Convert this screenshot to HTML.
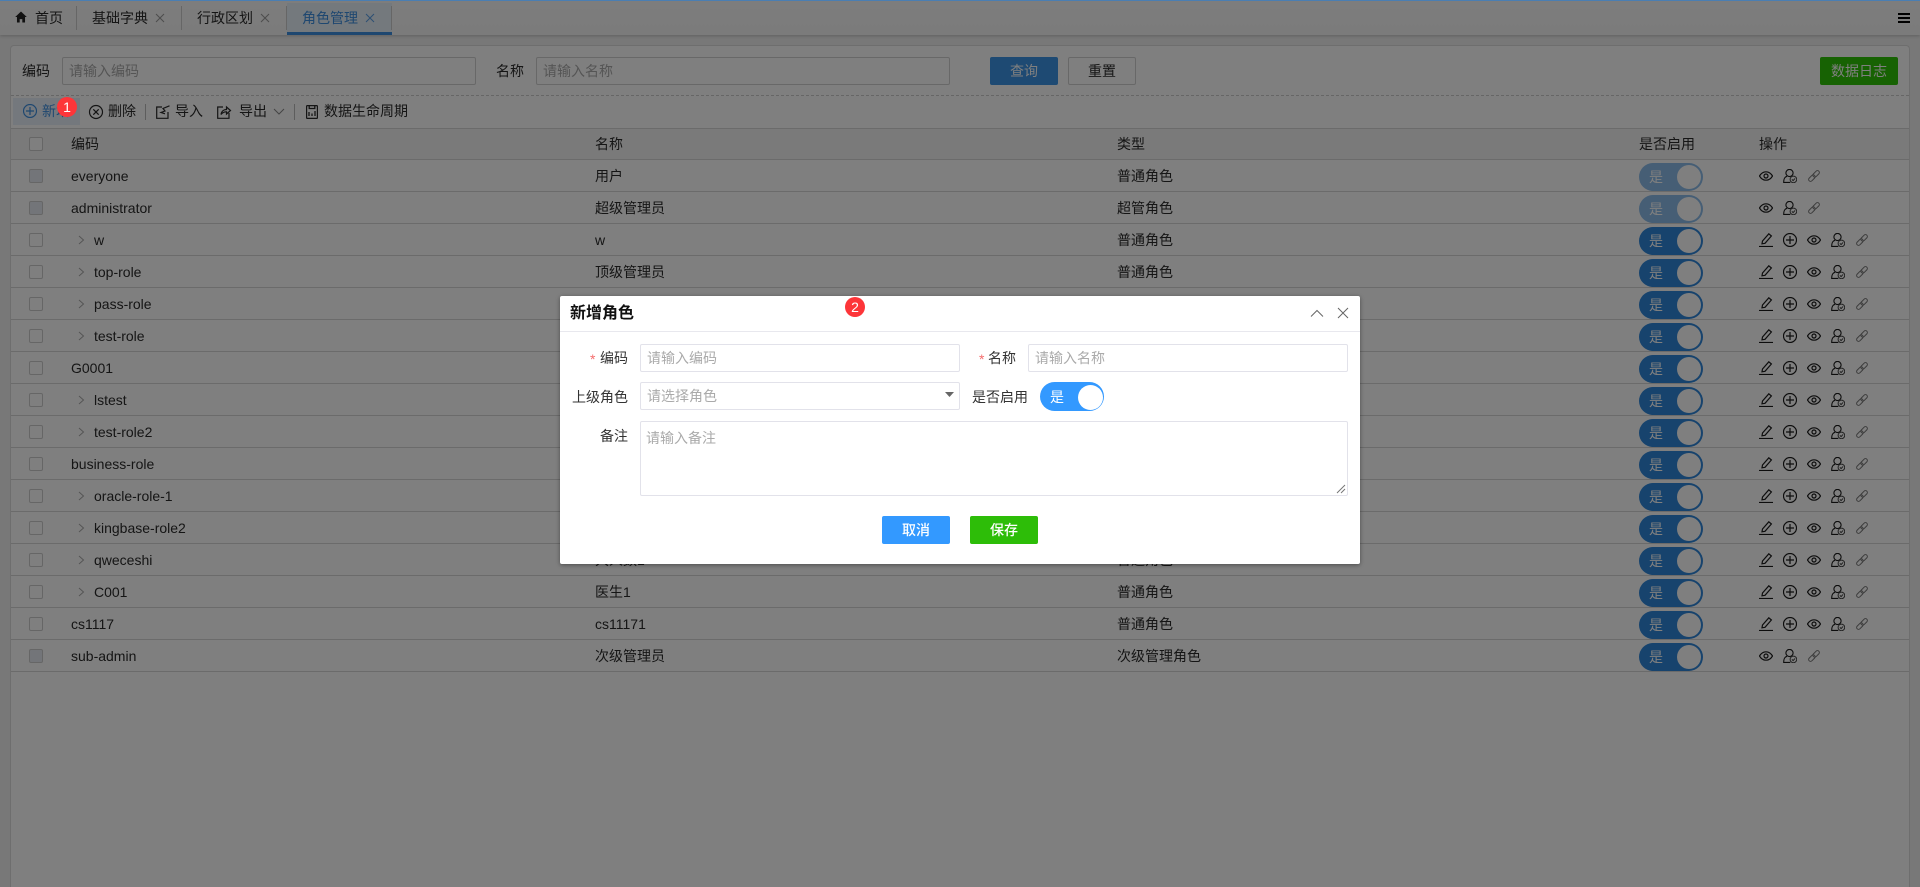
<!DOCTYPE html>
<html lang="zh-CN"><head><meta charset="utf-8"><title>角色管理</title>
<style>
*{box-sizing:border-box}
html,body{margin:0;padding:0;width:1920px;height:887px;overflow:hidden;background:#f0f0f0;font:14px/20px "Liberation Sans","Noto Sans CJK SC",sans-serif;color:#2a2a2a}
.a{position:absolute}
.t{position:absolute;white-space:nowrap}
svg{position:absolute;fill:none;stroke:currentColor;overflow:visible}
#tabs{left:0;top:0;width:1920px;height:35px;background:linear-gradient(#fbfbfb,#f6f6f6);box-shadow:0 1px 3px rgba(0,0,0,.2)}
.dv{position:absolute;top:6px;height:24px;width:1px;background:#ccc}
.x{color:#999}
#panel{left:10px;top:45px;width:1900px;height:842px;background:#fff;border:1px solid #dcdcdc;border-bottom:0;border-radius:4px 4px 0 0}
.in{position:absolute;height:28px;border:1px solid #d0d0d0;border-radius:2px;background:#fff;color:#aaa;padding:3px 6px}
#rows{position:absolute;left:11px;top:160px;width:1898px}
.r{position:relative;height:32px;border-bottom:1px solid #d6d6d6}
.hd{left:11px;top:128px;width:1898px;height:32px;background:#f5f5f5;border-top:1px solid #d6d6d6;border-bottom:1px solid #d6d6d6}
.cb{position:absolute;left:18px;top:9px;width:14px;height:14px;border:1px solid #ccc;border-radius:2px;background:#fff}
.cb.d{background:#e6ebf2;border-color:#ccc}
.c{position:absolute;top:6px;white-space:nowrap}
.c0{left:60px}.c0i{left:83px}.c1{left:584px}.c2{left:1106px}
.ch{position:absolute;left:67px;top:11px;color:#aaa}
.sw{position:absolute;left:1628px;top:3px;width:64px;height:28px;border-radius:14px;background:#2f87da;color:#fff}
.sw span{position:absolute;left:10px;top:4px}
.sw i{position:absolute;left:38px;top:2px;width:24px;height:24px;border-radius:50%;background:#fff}
.sw.d{opacity:.55}
.i1{left:1748px}.i2{left:1772px}.i3{left:1796px}.i4{left:1820px}.i5{left:1845px}
.ic{top:9px;color:#1a1a1a}
.lk{color:#777}
#ov{left:0;top:0;width:1920px;height:887px;background:rgba(0,0,0,.5)}
#topl{left:0;top:0;width:1920px;height:1px;background:#4a7eb2}
.bd{position:absolute;width:20px;height:20px;border-radius:50%;background:#fd3539;color:#fff;text-align:center;line-height:20px;font-size:14px}
#m{left:560px;top:296px;width:800px;height:268px;background:#fff;border-radius:2px;box-shadow:0 1px 4px rgba(0,0,0,.4);color:#333}
.mi{position:absolute;border:1px solid #e2e2ea;border-radius:2px;color:#aaa;background:#fff;padding:3px 6px;height:28px}
.req{color:#f56c6c;font-size:14px}
.btn{position:absolute;top:220px;width:68px;height:28px;border-radius:2px;color:#fff;text-align:center;line-height:28px;font-weight:500}
</style></head><body>
<svg width="0" height="0" style="position:absolute">
<symbol id="eye" viewBox="0 0 14 14"><path d="M.5 7C2.3 4 4.400 2.800 7 2.800S11.700 4 13.500 7C11.700 10 9.600 11.200 7 11.200S2.300 10 .5 7z" stroke-width="1.200"/><circle cx="7" cy="7" r="2" stroke-width="1.200"/></symbol>
<symbol id="usr" viewBox="0 0 14 14"><circle cx="6.500" cy="4" r="3.600" stroke-width="1.100"/><path d="M4 7.300C1.800 7.900 .7 9.300 .7 13.400H7.300" stroke-width="1.100"/><circle cx="10.400" cy="10.400" r="3.300" stroke-width="1" stroke="#444"/><path d="M8.900 10.400l1.200 1.200 2-2.200" stroke-width="1" stroke="#444"/></symbol>
<symbol id="lnk" viewBox="0 0 12 12"><g transform="rotate(-45 6 6)"><rect x="-.8" y="4.100" width="7.600" height="3.800" rx="1.900" stroke-width="1"/><rect x="5.200" y="4.100" width="7.600" height="3.800" rx="1.900" stroke-width="1"/></g></symbol>
<symbol id="edt" viewBox="0 0 14 14"><path d="M3 10.800L3.500 8 9.800.8l2.600 2.200L6 10.300z" stroke-width="1.200"/><path d="M0 13.500H14" stroke-width="1.200"/></symbol>
<symbol id="pls" viewBox="0 0 14 14"><circle cx="7" cy="7" r="6.500" stroke-width="1.200"/><path d="M7 3V11M3 7H11" stroke-width="1.200"/></symbol>
<symbol id="chv" viewBox="0 0 7 10"><path d="M1 1L5.500 5 1 9" stroke-width="1"/></symbol>
</svg>

<div id="tabs" class="a">
<svg style="left:15px;top:11px" width="12" height="12" viewBox="0 0 11 11"><path d="M5.500.5L.2 5.500H1.800V10.500H4.300V7.500H6.700V10.500H9.200V5.500H10.800z" fill="#222" stroke="none"/></svg>
<span class="t" style="left:35px;top:8px">首页</span><i class="dv" style="left:76px"></i>
<span class="t" style="left:92px;top:8px">基础字典</span><svg class="x" style="left:156px;top:14px" width="8" height="8"><path d="M0 0L8 8M8 0L0 8"/></svg><i class="dv" style="left:181px"></i>
<span class="t" style="left:197px;top:8px">行政区划</span><svg class="x" style="left:261px;top:14px" width="8" height="8"><path d="M0 0L8 8M8 0L0 8"/></svg><i class="dv" style="left:286px"></i>
<div class="a" style="left:287px;top:3px;width:105px;height:32px;background:#e8f2fb;border-bottom:3px solid #3d8fe0"></div>
<span class="t" style="left:302px;top:8px;color:#3d8fe0">角色管理</span><svg style="left:366px;top:14px;color:#5aa0e6" width="8" height="8"><path d="M0 0L8 8M8 0L0 8"/></svg><i class="dv" style="left:391px"></i>
<div class="a" style="left:1898px;top:13px;width:12px;height:2px;background:#000"></div><div class="a" style="left:1898px;top:17px;width:12px;height:2px;background:#000"></div><div class="a" style="left:1898px;top:21px;width:12px;height:2px;background:#000"></div>
</div>

<div id="panel" class="a"></div>
<span class="t" style="left:22px;top:61px">编码</span><div class="in" style="left:62px;top:57px;width:414px">请输入编码</div>
<span class="t" style="left:496px;top:61px">名称</span><div class="in" style="left:536px;top:57px;width:414px">请输入名称</div>
<div class="a" style="left:990px;top:57px;width:68px;height:28px;background:#3c94e6;border-radius:2px;color:#fff;text-align:center;line-height:28px">查询</div>
<div class="a" style="left:1068px;top:57px;width:68px;height:28px;background:#fff;border:1px solid #d0d0d0;border-radius:2px;text-align:center;line-height:26px">重置</div>
<div class="a" style="left:1820px;top:57px;width:78px;height:28px;background:#2fc406;border-radius:2px;color:#fff;text-align:center;line-height:28px">数据日志</div>
<div class="a" style="left:11px;top:95px;width:1898px;border-top:1px dashed #ccc"></div>

<div class="a" style="left:13px;top:98px;width:67px;height:27px;background:#e8f1fa"></div>
<svg style="left:23px;top:104px;color:#3d8fe0" width="14" height="14"><use href="#pls"/></svg>
<span class="t" style="left:42px;top:101px;color:#3d8fe0">新增</span>
<svg style="left:89px;top:105px" width="14" height="14" viewBox="0 0 14 14"><circle cx="7" cy="7" r="6.500" stroke-width="1.200"/><path d="M4.300 4.300L9.700 9.700M9.700 4.300L4.300 9.700" stroke-width="1.200"/></svg>
<span class="t" style="left:108px;top:101px">删除</span><i class="a" style="left:145px;top:104px;width:1px;height:16px;background:#bbb"></i>
<svg style="left:156px;top:105px" width="14" height="14" viewBox="0 0 14 14"><path d="M6 2H.7V13.300H12V7" stroke-width="1.200"/><path d="M13.500 .8L7 3.500 9 6 5 7.500 9 8.800" stroke-width="1.200"/></svg>
<span class="t" style="left:175px;top:101px">导入</span>
<svg style="left:217px;top:105px" width="14" height="14" viewBox="0 0 14 14"><path d="M6 2H.7V13.300H12V8" stroke-width="1.200"/><path d="M4 9.500C4.500 6 7 4.500 9.500 4.500V2L13.500 5.500 9.500 9V6.800C7.500 6.800 5.500 7.500 4 9.500z" stroke-width="1.200"/></svg>
<span class="t" style="left:239px;top:101px">导出</span>
<svg style="left:274px;top:109px;color:#888" width="10" height="6"><path d="M0 0L5 5 10 0"/></svg><i class="a" style="left:294px;top:104px;width:1px;height:16px;background:#bbb"></i>
<svg style="left:306px;top:105px" width="12" height="14" viewBox="0 0 12 14"><rect x=".6" y=".6" width="10.800" height="12.800" rx=".8" stroke-width="1.200"/><path d="M3.200 .6V3.500H8.800V.6M3 7V11M6 8.500V11M9 6V11" stroke-width="1.300"/></svg>
<span class="t" style="left:324px;top:101px">数据生命周期</span>

<div class="a hd"><i class="cb" style="top:8px"></i><span class="c" style="left:60px;top:5px">编码</span><span class="c" style="left:584px;top:5px">名称</span><span class="c" style="left:1106px;top:5px">类型</span><span class="c" style="left:1628px;top:5px">是否启用</span><span class="c" style="left:1748px;top:5px">操作</span></div>

<div id="rows">
<div class="r"><i class="cb d"></i><span class="c c0">everyone</span><span class="c c1">用户</span><span class="c c2">普通角色</span><div class="sw d"><span>是</span><i></i></div><svg class="ic i1" width="14" height="14" style="left:1748px;top:9px"><use href="#eye"/></svg><svg class="ic" width="14" height="14" style="left:1772px;top:9px"><use href="#usr"/></svg><svg class="lk" width="12" height="12" style="left:1797px;top:10px"><use href="#lnk"/></svg></div>
<div class="r"><i class="cb d"></i><span class="c c0">administrator</span><span class="c c1">超级管理员</span><span class="c c2">超管角色</span><div class="sw d"><span>是</span><i></i></div><svg class="ic" width="14" height="14" style="left:1748px;top:9px"><use href="#eye"/></svg><svg class="ic" width="14" height="14" style="left:1772px;top:9px"><use href="#usr"/></svg><svg class="lk" width="12" height="12" style="left:1797px;top:10px"><use href="#lnk"/></svg></div>
<div class="r"><i class="cb"></i><svg class="ch" width="7" height="10"><use href="#chv"/></svg><span class="c c0i">w</span><span class="c c1">w</span><span class="c c2">普通角色</span><div class="sw"><span>是</span><i></i></div><svg class="ic i1" width="14" height="14"><use href="#edt"/></svg><svg class="ic i2" width="14" height="14"><use href="#pls"/></svg><svg class="ic i3" width="14" height="14"><use href="#eye"/></svg><svg class="ic i4" width="14" height="14"><use href="#usr"/></svg><svg class="lk i5" width="12" height="12" style="top:10px"><use href="#lnk"/></svg></div>
<div class="r"><i class="cb"></i><svg class="ch" width="7" height="10"><use href="#chv"/></svg><span class="c c0i">top-role</span><span class="c c1">顶级管理员</span><span class="c c2">普通角色</span><div class="sw"><span>是</span><i></i></div><svg class="ic i1" width="14" height="14"><use href="#edt"/></svg><svg class="ic i2" width="14" height="14"><use href="#pls"/></svg><svg class="ic i3" width="14" height="14"><use href="#eye"/></svg><svg class="ic i4" width="14" height="14"><use href="#usr"/></svg><svg class="lk i5" width="12" height="12" style="top:10px"><use href="#lnk"/></svg></div>
<div class="r"><i class="cb"></i><svg class="ch" width="7" height="10"><use href="#chv"/></svg><span class="c c0i">pass-role</span><span class="c c1">通过角色</span><span class="c c2">普通角色</span><div class="sw"><span>是</span><i></i></div><svg class="ic i1" width="14" height="14"><use href="#edt"/></svg><svg class="ic i2" width="14" height="14"><use href="#pls"/></svg><svg class="ic i3" width="14" height="14"><use href="#eye"/></svg><svg class="ic i4" width="14" height="14"><use href="#usr"/></svg><svg class="lk i5" width="12" height="12" style="top:10px"><use href="#lnk"/></svg></div>
<div class="r"><i class="cb"></i><svg class="ch" width="7" height="10"><use href="#chv"/></svg><span class="c c0i">test-role</span><span class="c c1">测试角色</span><span class="c c2">普通角色</span><div class="sw"><span>是</span><i></i></div><svg class="ic i1" width="14" height="14"><use href="#edt"/></svg><svg class="ic i2" width="14" height="14"><use href="#pls"/></svg><svg class="ic i3" width="14" height="14"><use href="#eye"/></svg><svg class="ic i4" width="14" height="14"><use href="#usr"/></svg><svg class="lk i5" width="12" height="12" style="top:10px"><use href="#lnk"/></svg></div>
<div class="r"><i class="cb"></i><span class="c c0">G0001</span><span class="c c1">角色</span><span class="c c2">普通角色</span><div class="sw"><span>是</span><i></i></div><svg class="ic i1" width="14" height="14"><use href="#edt"/></svg><svg class="ic i2" width="14" height="14"><use href="#pls"/></svg><svg class="ic i3" width="14" height="14"><use href="#eye"/></svg><svg class="ic i4" width="14" height="14"><use href="#usr"/></svg><svg class="lk i5" width="12" height="12" style="top:10px"><use href="#lnk"/></svg></div>
<div class="r"><i class="cb"></i><svg class="ch" width="7" height="10"><use href="#chv"/></svg><span class="c c0i">lstest</span><span class="c c1">测试</span><span class="c c2">普通角色</span><div class="sw"><span>是</span><i></i></div><svg class="ic i1" width="14" height="14"><use href="#edt"/></svg><svg class="ic i2" width="14" height="14"><use href="#pls"/></svg><svg class="ic i3" width="14" height="14"><use href="#eye"/></svg><svg class="ic i4" width="14" height="14"><use href="#usr"/></svg><svg class="lk i5" width="12" height="12" style="top:10px"><use href="#lnk"/></svg></div>
<div class="r"><i class="cb"></i><svg class="ch" width="7" height="10"><use href="#chv"/></svg><span class="c c0i">test-role2</span><span class="c c1">测试角色2</span><span class="c c2">普通角色</span><div class="sw"><span>是</span><i></i></div><svg class="ic i1" width="14" height="14"><use href="#edt"/></svg><svg class="ic i2" width="14" height="14"><use href="#pls"/></svg><svg class="ic i3" width="14" height="14"><use href="#eye"/></svg><svg class="ic i4" width="14" height="14"><use href="#usr"/></svg><svg class="lk i5" width="12" height="12" style="top:10px"><use href="#lnk"/></svg></div>
<div class="r"><i class="cb"></i><span class="c c0">business-role</span><span class="c c1">业务角色</span><span class="c c2">普通角色</span><div class="sw"><span>是</span><i></i></div><svg class="ic i1" width="14" height="14"><use href="#edt"/></svg><svg class="ic i2" width="14" height="14"><use href="#pls"/></svg><svg class="ic i3" width="14" height="14"><use href="#eye"/></svg><svg class="ic i4" width="14" height="14"><use href="#usr"/></svg><svg class="lk i5" width="12" height="12" style="top:10px"><use href="#lnk"/></svg></div>
<div class="r"><i class="cb"></i><svg class="ch" width="7" height="10"><use href="#chv"/></svg><span class="c c0i">oracle-role-1</span><span class="c c1">角色1</span><span class="c c2">普通角色</span><div class="sw"><span>是</span><i></i></div><svg class="ic i1" width="14" height="14"><use href="#edt"/></svg><svg class="ic i2" width="14" height="14"><use href="#pls"/></svg><svg class="ic i3" width="14" height="14"><use href="#eye"/></svg><svg class="ic i4" width="14" height="14"><use href="#usr"/></svg><svg class="lk i5" width="12" height="12" style="top:10px"><use href="#lnk"/></svg></div>
<div class="r"><i class="cb"></i><svg class="ch" width="7" height="10"><use href="#chv"/></svg><span class="c c0i">kingbase-role2</span><span class="c c1">角色2</span><span class="c c2">普通角色</span><div class="sw"><span>是</span><i></i></div><svg class="ic i1" width="14" height="14"><use href="#edt"/></svg><svg class="ic i2" width="14" height="14"><use href="#pls"/></svg><svg class="ic i3" width="14" height="14"><use href="#eye"/></svg><svg class="ic i4" width="14" height="14"><use href="#usr"/></svg><svg class="lk i5" width="12" height="12" style="top:10px"><use href="#lnk"/></svg></div>
<div class="r"><i class="cb"></i><svg class="ch" width="7" height="10"><use href="#chv"/></svg><span class="c c0i">qweceshi</span><span class="c c1">大人数1</span><span class="c c2">普通角色</span><div class="sw"><span>是</span><i></i></div><svg class="ic i1" width="14" height="14"><use href="#edt"/></svg><svg class="ic i2" width="14" height="14"><use href="#pls"/></svg><svg class="ic i3" width="14" height="14"><use href="#eye"/></svg><svg class="ic i4" width="14" height="14"><use href="#usr"/></svg><svg class="lk i5" width="12" height="12" style="top:10px"><use href="#lnk"/></svg></div>
<div class="r"><i class="cb"></i><svg class="ch" width="7" height="10"><use href="#chv"/></svg><span class="c c0i">C001</span><span class="c c1">医生1</span><span class="c c2">普通角色</span><div class="sw"><span>是</span><i></i></div><svg class="ic i1" width="14" height="14"><use href="#edt"/></svg><svg class="ic i2" width="14" height="14"><use href="#pls"/></svg><svg class="ic i3" width="14" height="14"><use href="#eye"/></svg><svg class="ic i4" width="14" height="14"><use href="#usr"/></svg><svg class="lk i5" width="12" height="12" style="top:10px"><use href="#lnk"/></svg></div>
<div class="r"><i class="cb"></i><span class="c c0">cs1117</span><span class="c c1">cs11171</span><span class="c c2">普通角色</span><div class="sw"><span>是</span><i></i></div><svg class="ic i1" width="14" height="14"><use href="#edt"/></svg><svg class="ic i2" width="14" height="14"><use href="#pls"/></svg><svg class="ic i3" width="14" height="14"><use href="#eye"/></svg><svg class="ic i4" width="14" height="14"><use href="#usr"/></svg><svg class="lk i5" width="12" height="12" style="top:10px"><use href="#lnk"/></svg></div>
<div class="r"><i class="cb d"></i><span class="c c0">sub-admin</span><span class="c c1">次级管理员</span><span class="c c2">次级管理角色</span><div class="sw"><span>是</span><i></i></div><svg class="ic" width="14" height="14" style="left:1748px;top:9px"><use href="#eye"/></svg><svg class="ic" width="14" height="14" style="left:1772px;top:9px"><use href="#usr"/></svg><svg class="lk" width="12" height="12" style="left:1797px;top:10px"><use href="#lnk"/></svg></div>
</div>

<div id="ov" class="a"></div>
<div id="topl" class="a"></div>
<div class="bd" style="left:57px;top:97px">1</div>

<div id="m" class="a">
<span class="t" style="left:10px;top:7px;font-size:16px;line-height:22px;font-weight:bold;color:#111">新增角色</span>
<div class="a" style="left:0;top:35px;width:800px;height:1px;background:#e8e8ee"></div>
<svg style="left:751px;top:14px;color:#666" width="12" height="7"><path d="M0 6.500L6 .5 12 6.500"/></svg>
<svg style="left:778px;top:12px;color:#666" width="10" height="10"><path d="M0 0L10 10M10 0L0 10"/></svg>
<span class="t req" style="left:30px;top:50px;line-height:26px">*</span><span class="t" style="left:40px;top:49px;line-height:26px">编码</span>
<div class="mi" style="left:80px;top:48px;width:320px">请输入编码</div>
<span class="t req" style="left:419px;top:50px;line-height:26px">*</span><span class="t" style="left:428px;top:49px;line-height:26px">名称</span>
<div class="mi" style="left:468px;top:48px;width:320px">请输入名称</div>
<span class="t" style="left:12px;top:88px;line-height:26px">上级角色</span>
<div class="mi" style="left:80px;top:86px;width:320px">请选择角色</div>
<svg style="left:385px;top:96px" width="9" height="5"><path d="M0 0H9L4.500 5z" fill="#666" stroke="none"/></svg>
<span class="t" style="left:412px;top:88px;line-height:26px">是否启用</span>
<div class="a" style="left:480px;top:86px;width:64px;height:29px;border-radius:15px;background:#39f;color:#fff"><span class="t" style="left:10px;top:5px">是</span><i class="a" style="left:38px;top:3px;width:25px;height:25px;border-radius:50%;background:#fff"></i></div>
<span class="t" style="left:40px;top:127px;line-height:26px">备注</span>
<div class="mi" style="left:80px;top:125px;width:708px;height:75px;padding:6px 5px">请输入备注</div>
<svg style="left:775px;top:187px;color:#777" width="10" height="10"><path d="M2 10L10 2M6 10L10 6"/></svg>
<div class="btn" style="left:322px;background:#39f">取消</div>
<div class="btn" style="left:410px;background:#2dbd08">保存</div>
</div>
<div class="bd" style="left:845px;top:297px">2</div>
</body></html>
